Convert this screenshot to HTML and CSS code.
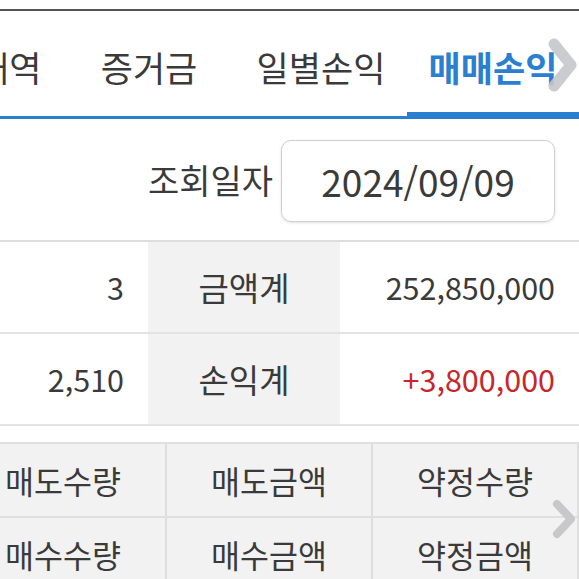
FILE: index.html
```
<!DOCTYPE html>
<html lang="ko">
<head>
<meta charset="utf-8">
<link rel="stylesheet" href="styles.css">
</head>
<body>
<div class="topline"></div>
<div class="tabbar">
  <div class="tabstrip">
    <div class="tab">거래내역</div>
    <div class="tab">증거금</div>
    <div class="tab">일별손익</div>
    <div class="tab active">매매손익</div>
  </div>
  <svg class="chev chev-top" viewBox="0 0 30 56" width="30" height="56"><polyline points="7,7 24,28 7,49" fill="none" stroke="#c6c7cb" stroke-width="11" stroke-linecap="round" stroke-linejoin="round"/></svg>
</div>
<div class="daterow">
  <span class="datelabel">조회일자</span>
  <div class="datebox">2024/09/09</div>
</div>
<div class="summary">
  <div class="row">
    <div class="val">3</div>
    <div class="lbl">금액계</div>
    <div class="val">252,850,000</div>
  </div>
  <div class="row">
    <div class="val">2,510</div>
    <div class="lbl">손익계</div>
    <div class="val red">+3,800,000</div>
  </div>
</div>
<div class="gridwrap">
  <div class="hgrid">
    <div class="cell">매도수량</div>
    <div class="cell">매도금액</div>
    <div class="cell">약정수량</div>
    <div class="cell">매수수량</div>
    <div class="cell">매수금액</div>
    <div class="cell">약정금액</div>
  </div>
  <svg class="chev chev-bot" viewBox="0 0 24 40" width="24" height="40"><polyline points="5,5 19,20 5,35" fill="none" stroke="#c8c8ca" stroke-width="8" stroke-linecap="round" stroke-linejoin="round"/></svg>
</div>
</body>
</html>
```
FILE: styles.css
```
html, body {
  margin: 0;
  padding: 0;
  background: #fff;
  font-family: "Noto Sans CJK KR", "Noto Sans", sans-serif;
  color: #3a3a3a;
  overflow: hidden;
}
.topline {
  margin-top: 9px;
  height: 2px;
  background: #555;
}
.tabbar {
  position: relative;
  height: 105px;
  border-bottom: 3px solid #2b7fd0;
  overflow: hidden;
}
.tabstrip {
  display: flex;
  height: 100%;
  margin-left: -109px;
}
.tab {
  flex: 0 0 172px;
  display: flex;
  align-items: center;
  justify-content: center;
  padding-top: 5px;
  box-sizing: border-box;
  font-size: 35px;
  color: #3a3a3a;
  white-space: nowrap;
}
.tab.active {
  color: #2b7fd0;
  font-weight: bold;
  font-size: 35px;
  box-shadow: inset 0 -4px 0 #2b7fd0;
}
.chev {
  position: absolute;
}
.chev-top {
  right: 2px;
  top: 26px;
  opacity: 0.9;
}
.daterow {
  height: 121px;
  display: flex;
  justify-content: flex-end;
  align-items: center;
  padding-right: 24px;
  border-bottom: 2px solid #dedede;
}
.datelabel {
  font-size: 34px;
  margin-right: 8px;
}
.datebox {
  width: 274px;
  height: 82px;
  box-sizing: border-box;
  border: 1px solid #cfcfcf;
  border-radius: 10px;
  box-shadow: 0 1px 3px rgba(0,0,0,0.12);
  display: flex;
  align-items: center;
  justify-content: center;
  font-size: 37px;
  margin-top: 2px;
}
.row {
  display: grid;
  grid-template-columns: 148px 192px 1fr;
  height: 90px;
  border-bottom: 2px solid #e3e3e3;
}
.val {
  display: flex;
  align-items: center;
  justify-content: flex-end;
  padding-right: 24px;
  font-size: 30.5px;
}
.lbl {
  background: #f2f2f2;
  display: flex;
  align-items: center;
  justify-content: center;
  font-size: 33px;
}
.red {
  color: #c8262a;
}
.gridwrap {
  position: relative;
  margin-top: 16px;
  border-top: 2px solid #e0e0e0;
  background: #f2f2f2;
  overflow: hidden;
  height: 140px;
}
.hgrid {
  display: grid;
  grid-template-columns: 206px 206px 206px;
  grid-auto-rows: 74px;
  margin-left: -39px;
}
.cell {
  display: flex;
  align-items: center;
  justify-content: center;
  font-size: 31.5px;
  border-right: 2px solid #dedede;
  border-bottom: 2px solid #e0e0e0;
}
.chev-bot {
  right: 3px;
  top: 55px;
}
```
